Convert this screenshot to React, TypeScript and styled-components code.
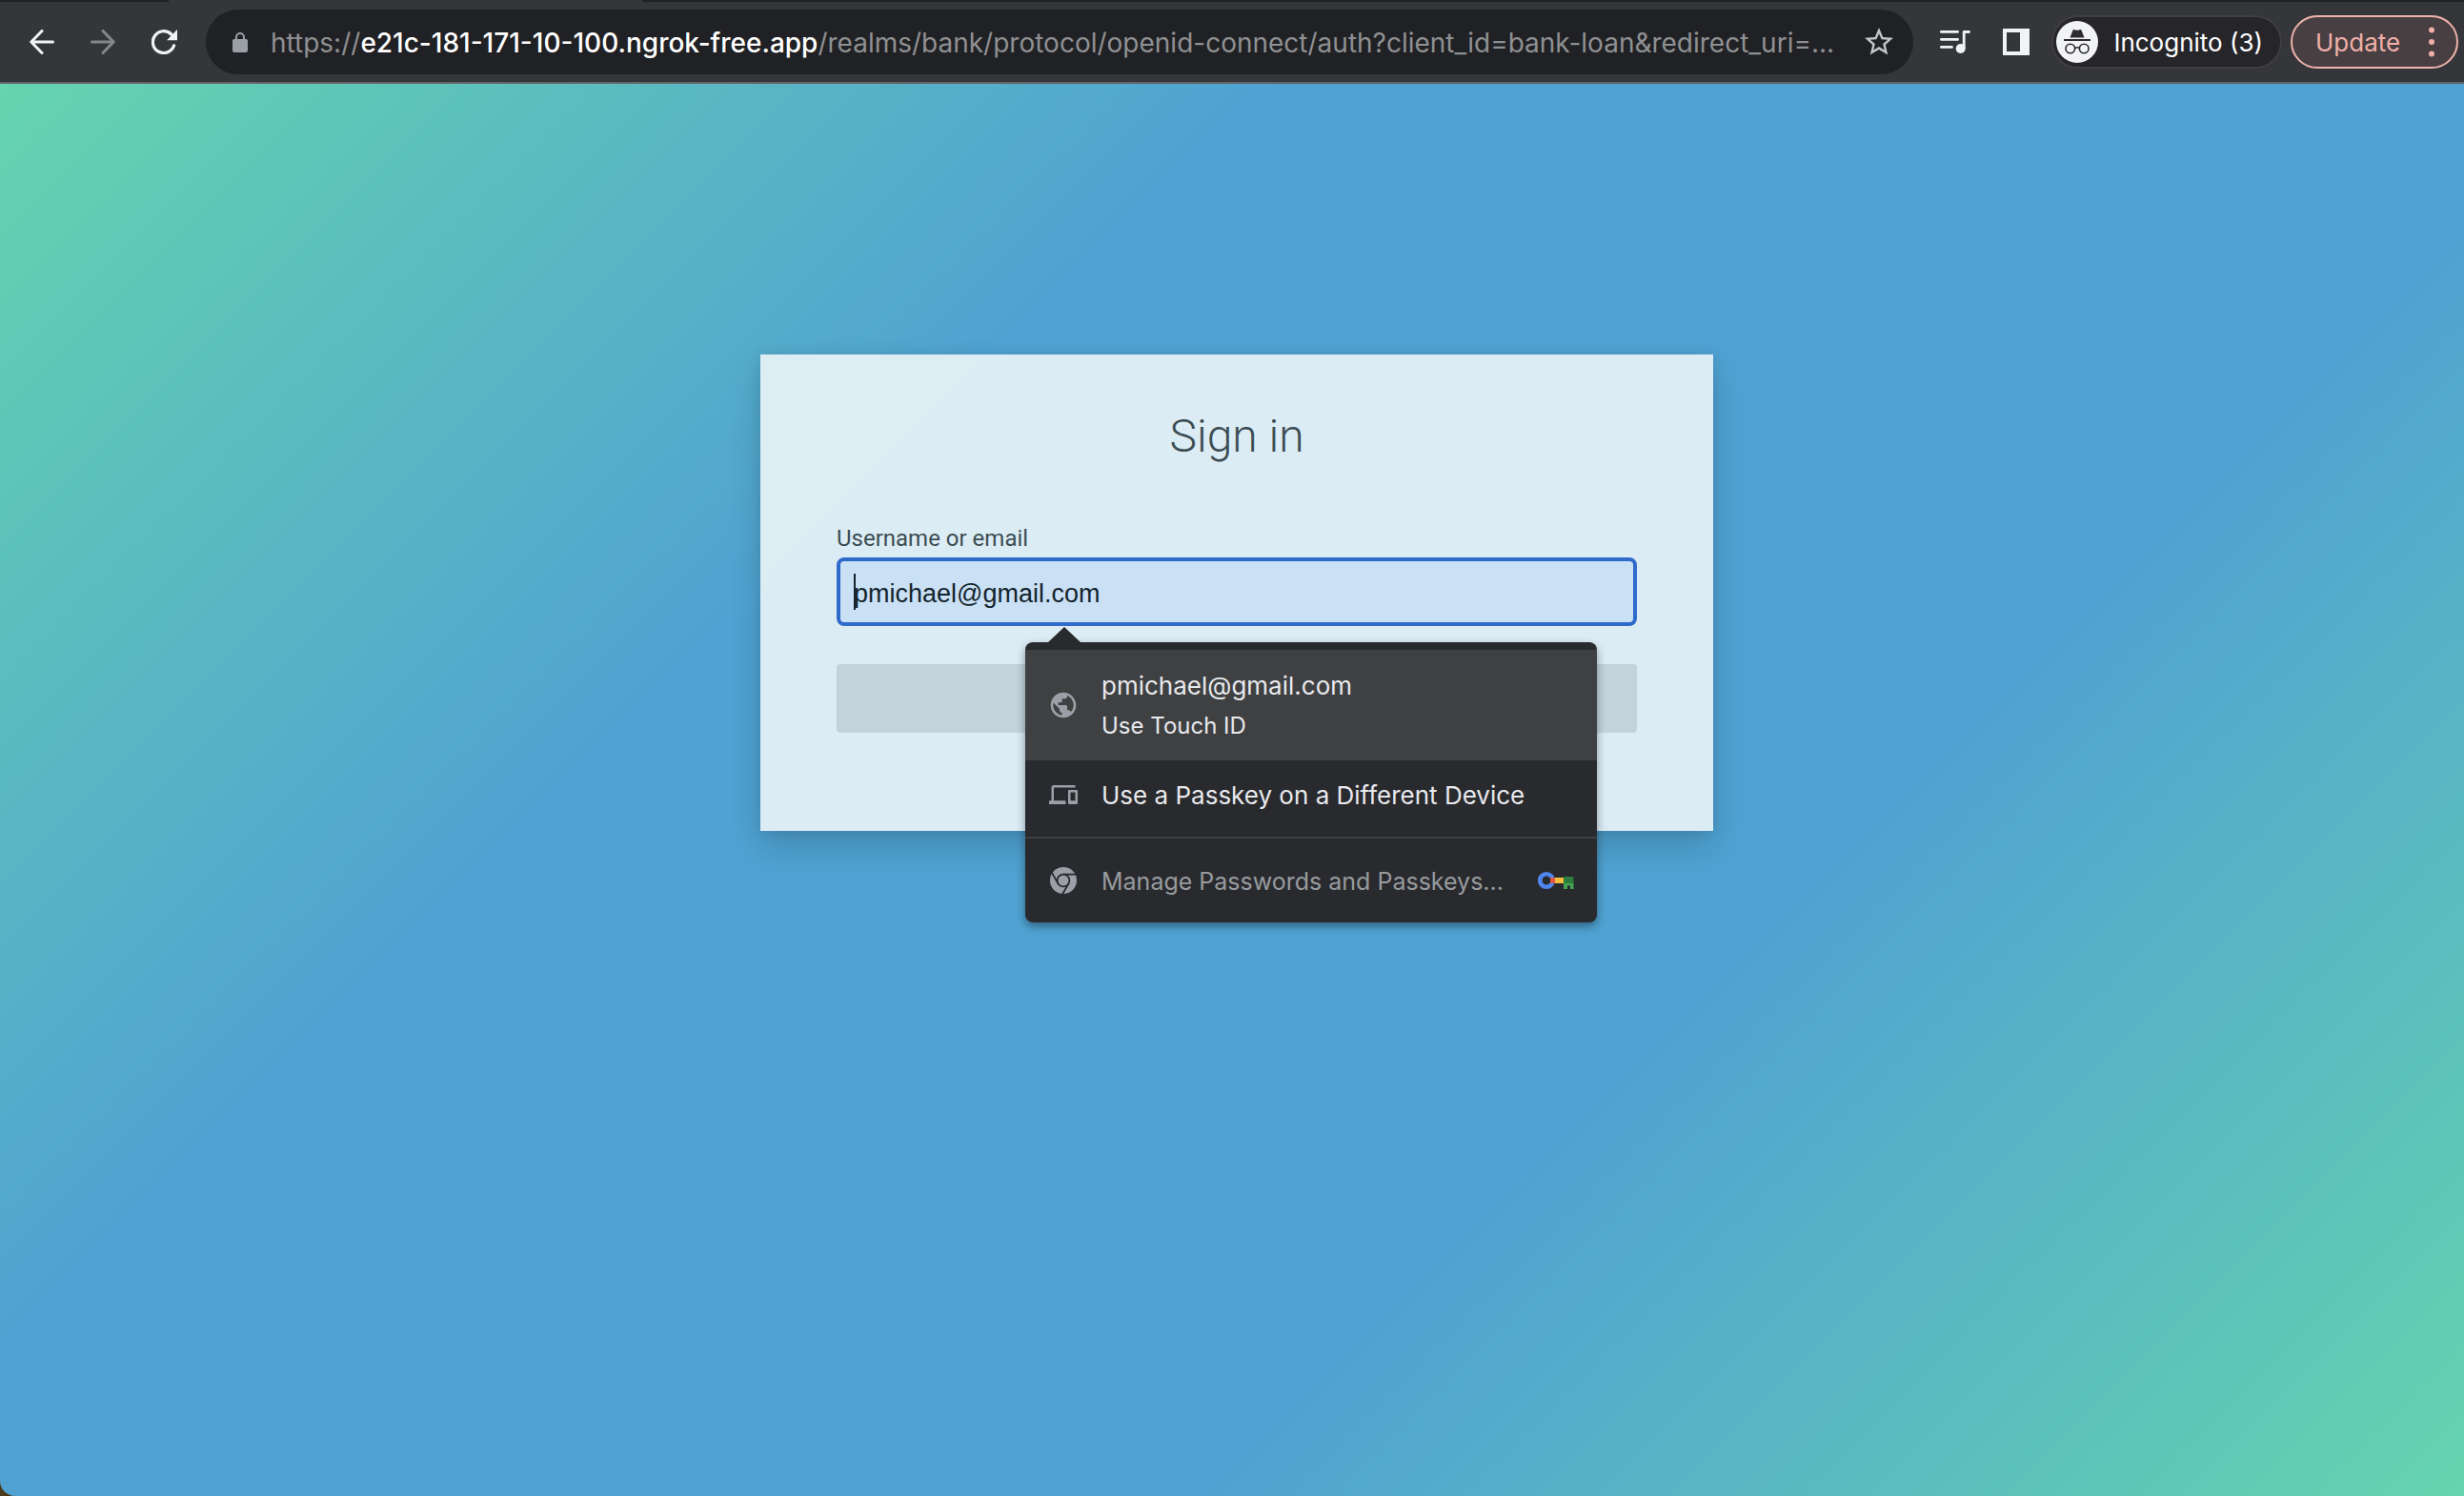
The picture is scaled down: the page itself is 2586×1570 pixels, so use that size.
import React from 'react';
import styled, { createGlobalStyle } from 'styled-components';
import { MdDevices, MdPublic, MdStarBorder } from 'react-icons/md';

const uiFont = "Inter, 'Liberation Sans', sans-serif";
const pageFont = "Roboto, 'Liberation Sans', sans-serif";

const GlobalStyle = createGlobalStyle`
  *, *::before, *::after { box-sizing: border-box; }
  body { margin: 0; background: #4a3a1c; }
  button { margin: 0; padding: 0; border: 0; background: none; color: inherit; font: inherit; }
  svg { display: block; flex: none; }
`;

const Window = styled.div`
  min-height: 100vh;
  display: flex;
  flex-direction: column;
  font-family: ${uiFont};
`;

/* ---------- browser chrome ---------- */

const TabStrip = styled.div`
  display: flex;
  height: 2px;
  padding-left: 177px;
  background: #202124;
`;

const ActiveTabEdge = styled.div`
  width: 497px;
  background: #35363a;
`;

const Toolbar = styled.header`
  display: flex;
  align-items: center;
  height: 86px;
  padding: 0 6px 0 31px;
  background: #35363a;
  border-bottom: 2px solid #636468;
`;

const NavButtons = styled.nav`
  display: flex;
  align-items: center;
  gap: 38px;
  margin-right: 30px;
`;

const IconButton = styled.button<{ $dim?: boolean }>`
  display: flex;
  color: ${p => (p.$dim ? '#868789' : '#f1f3f4')};
`;

const AddressBar = styled.div`
  display: flex;
  align-items: center;
  flex: 1;
  min-width: 0;
  height: 68px;
  padding: 0 18px 0 28px;
  border-radius: 34px;
  background: #202124;
  color: #bdc1c6;
`;

const Url = styled.div`
  flex: 1;
  min-width: 0;
  margin: 0 24px;
  padding-top: 2px;
  overflow: hidden;
  white-space: nowrap;
  color: #8f9092;
  font-size: 28px;
  line-height: 40px;
`;

const Host = styled.span`
  color: #ffffff;
  font-weight: 500;
`;

const Actions = styled.div`
  display: flex;
  align-items: center;
  gap: 34px;
  margin: 0 23px 0 28px;
`;

const Pill = styled.button<{ $tone: 'profile' | 'update' }>`
  display: flex;
  align-items: center;
  justify-content: space-between;
  height: 56px;
  border-radius: 28px;
  border: 2px solid ${p => (p.$tone === 'update' ? '#f0b3ab' : '#3f3e43')};
  background: ${p => (p.$tone === 'update' ? '#473f42' : '#26252a')};
  color: ${p => (p.$tone === 'update' ? '#f0b0a8' : '#ffffff')};
  width: ${p => (p.$tone === 'update' ? 176 : 242)}px;
  padding: ${p => (p.$tone === 'update' ? '0 23px 0 24px' : '0 18px 0 3px')};
  margin-left: ${p => (p.$tone === 'update' ? 9 : 0)}px;
  font-size: 26px;
  line-height: 36px;
  white-space: nowrap;
`;

const PillText = styled.span`
  padding-top: 2px;
`;

/* ---------- login page ---------- */

const Page = styled.main`
  flex: 1;
  display: flex;
  align-items: flex-start;
  justify-content: center;
  padding: 284px 0 80px 10px;
  border-bottom-left-radius: 16px;
  background: linear-gradient(135deg, #66d4ae 0%, #4fa2d2 33%, #4fa2d2 67%, #66d4ae 100%);
  font-family: ${pageFont};
`;

const Card = styled.form`
  width: 1000px;
  padding: 58px 80px 103px;
  background: rgba(255, 255, 252, 0.8);
  box-shadow: 0 16px 32px rgba(3, 3, 3, 0.16), 0 0 12px rgba(3, 3, 3, 0.08);
`;

const Title = styled.h1`
  margin: 0 0 61px;
  color: #3b4c53;
  font-size: 48px;
  font-weight: 300;
  line-height: 56px;
  text-align: center;
`;

const Label = styled.label`
  display: block;
  margin-bottom: 2px;
  color: #3b4c53;
  font-size: 24px;
  line-height: 36px;
`;

const Field = styled.div`
  position: relative;
  margin-bottom: 40px;
`;

const TextInput = styled.input`
  display: block;
  width: 100%;
  height: 72px;
  padding: 4px 14px 0;
  border: 4px solid #2f6bcb;
  border-radius: 8px;
  outline: none;
  background: #cae0f5;
  color: #13242c;
  font-family: 'Liberation Sans', Arial, sans-serif;
  font-size: 27px;
  line-height: 36px;
`;

const Caret = styled.span`
  position: absolute;
  top: 17px;
  left: 18px;
  width: 2px;
  height: 38px;
  background: #13242c;
`;

const SubmitButton = styled.button`
  display: block;
  width: 100%;
  height: 72px;
  border-radius: 4px;
  background: #c3d3db;
`;

/* ---------- passkey suggestions ---------- */

const Popup = styled.div`
  position: absolute;
  z-index: 1;
  top: calc(100% + 17px);
  left: 198px;
  width: 600px;
  padding-top: 8px;
  border-radius: 8px;
  background: #292a2e;
  box-shadow: 0 4px 10px rgba(0, 0, 0, 0.4);
  font-family: ${uiFont};

  &::before {
    content: '';
    position: absolute;
    bottom: 100%;
    left: 24px;
    border: 17px solid transparent;
    border-top-width: 0;
    border-bottom: 16px solid #292a2e;
  }
`;

const Option = styled.button<{ $height: number; $active?: boolean; $muted?: boolean }>`
  display: flex;
  align-items: center;
  gap: 24px;
  width: 100%;
  height: ${p => p.$height}px;
  padding: 0 24px;
  background: ${p => (p.$active ? '#3f4042' : 'transparent')};
  color: ${p => (p.$muted ? '#979b9e' : '#e8e9ed')};
  font-size: ${p => (p.$muted ? 25 : 26)}px;
  line-height: 36px;
  text-align: left;
  white-space: nowrap;
`;

const OptionIcon = styled.span`
  display: flex;
  flex: none;
  justify-content: center;
  width: 32px;
  color: #9aa0a6;
`;

const OptionText = styled.span`
  display: flex;
  flex-direction: column;
  gap: 6px;
  flex: 1;
  padding-top: 2px;
`;

const OptionHint = styled.span`
  font-size: 24px;
`;

const Divider = styled.hr`
  height: 2px;
  margin: 8px 0 0;
  border: 0;
  background: #3f4045;
`;

/* ---------- icons ---------- */

const BackIcon = () => (
  <svg width="26" height="26" viewBox="0 0 26 26" fill="none" stroke="currentColor" strokeWidth="3" strokeLinecap="round" strokeLinejoin="round">
    <path d="M24.500 13H2M13 1.500L1.800 13L13 24.500" />
  </svg>
);

const ForwardIcon = () => (
  <svg width="26" height="26" viewBox="0 0 26 26" fill="none" stroke="currentColor" strokeWidth="3" strokeLinecap="round" strokeLinejoin="round">
    <path d="M1.500 13H24M13 1.500L24.200 13L13 24.500" />
  </svg>
);

const ReloadIcon = () => (
  <svg width="27" height="26" viewBox="0 0 27 26">
    <path d="M23.600 16.800A11.400 11.400 0 1 1 20.800 5" fill="none" stroke="currentColor" strokeWidth="3.200" strokeLinecap="round" />
    <path d="M27 0v11.300H16z" fill="currentColor" />
  </svg>
);

const LockIcon = () => (
  <svg width="16" height="21" viewBox="0 0 16 21">
    <rect y="7" width="16" height="14" rx="2" fill="#9aa0a6" />
    <path d="M4 8V5a4 4 0 0 1 8 0v3" fill="none" stroke="#9aa0a6" strokeWidth="2" />
  </svg>
);

const QueueIcon = () => (
  <svg width="32" height="28" viewBox="0 0 32 28" fill="none" stroke="currentColor" strokeWidth="2.800" strokeLinecap="round">
    <path d="M1.400 3.400H18.600M1.400 11.400H18.600M1.400 19.400H12.500" />
    <path d="M30.500 3.400H25.200V21" strokeLinecap="butt" strokeLinejoin="round" />
    <path d="M26 3.400H30.500" />
    <circle cx="21.700" cy="21" r="5" fill="currentColor" stroke="none" />
  </svg>
);

const SidePanelIcon = () => (
  <svg width="28" height="28" viewBox="0 0 28 28" fill="currentColor">
    <path fillRule="evenodd" d="M0 0H28V28H0zM4 4V24H18V4z" />
  </svg>
);

const IncognitoIcon = () => (
  <svg width="44" height="44" viewBox="0 0 44 44">
    <circle cx="22" cy="22" r="22" fill="#f1f3f4" />
    <path d="M14.500 17.500L17.500 9.800Q18 8.800 19.200 9.200L21 9.800H23L24.800 9.200Q26 8.800 26.500 9.800L29.500 17.500z" fill="#2b2b30" />
    <path d="M8 20H36" stroke="#2b2b30" strokeWidth="2" />
    <g fill="none" stroke="#2b2b30" strokeWidth="1.600">
      <circle cx="14.800" cy="29" r="4.800" />
      <circle cx="29.200" cy="29" r="4.800" />
      <path d="M19.600 28.600Q22 27 24.400 28.600" />
    </g>
  </svg>
);

const MoreIcon = () => (
  <svg width="6" height="34" viewBox="0 0 6 34" fill="currentColor">
    <circle cx="3" cy="4.500" r="3" />
    <circle cx="3" cy="17" r="3" />
    <circle cx="3" cy="29.500" r="3" />
  </svg>
);

const ChromeIcon = () => (
  <svg width="28" height="28" viewBox="0 0 28 28">
    <circle cx="14" cy="14" r="14" fill="#9aa0a6" />
    <g stroke="#292a2e" strokeWidth="1.800">
      {[0, 120, 240].map(angle => (
        <path key={angle} d="M14 7.600H28" transform={`rotate(${angle} 14 14)`} />
      ))}
    </g>
    <circle cx="14" cy="14" r="6.400" fill="#9aa0a6" stroke="#292a2e" strokeWidth="1.800" />
  </svg>
);

const KeyIcon = () => (
  <svg width="38" height="22" viewBox="0 0 38 22">
    <circle cx="9" cy="11" r="6.800" fill="none" stroke="#4f86ee" strokeWidth="4.600" />
    <path d="M13 8H18V14H13z" fill="#e2574c" />
    <path d="M18 8H27V14H18z" fill="#f6bf3f" />
    <path d="M27 7H37.500V14H27z" fill="#2d7d3e" />
    <path d="M27 14H37.500V20H34V16.500H31V20H27z" fill="#47a457" />
  </svg>
);

const BrowserBar = () => (
  <>
    <TabStrip>
      <ActiveTabEdge />
    </TabStrip>
    <Toolbar>
      <NavButtons>
        <IconButton aria-label="Back"><BackIcon /></IconButton>
        <IconButton $dim aria-label="Forward"><ForwardIcon /></IconButton>
        <IconButton aria-label="Reload"><ReloadIcon /></IconButton>
      </NavButtons>
      <AddressBar>
        <LockIcon />
        <Url>
          https://<Host>e21c-181-171-10-100.ngrok-free.app</Host>/realms/bank/protocol/openid-connect/auth?client_id=bank-loan&amp;redirect_uri=...
        </Url>
        <IconButton aria-label="Bookmark this page">
          <MdStarBorder size={36} color="#c4c5c6" />
        </IconButton>
      </AddressBar>
      <Actions>
        <IconButton aria-label="Media controls"><QueueIcon /></IconButton>
        <IconButton aria-label="Side panel"><SidePanelIcon /></IconButton>
      </Actions>
      <Pill $tone="profile">
        <IncognitoIcon />
        <PillText>Incognito (3)</PillText>
      </Pill>
      <Pill $tone="update">
        <PillText>Update</PillText>
        <MoreIcon />
      </Pill>
    </Toolbar>
  </>
);

const PasskeyPopup = () => (
  <Popup>
    <Option type="button" $height={116} $active>
      <OptionIcon><MdPublic size={32} /></OptionIcon>
      <OptionText>
        <span>pmichael@gmail.com</span>
        <OptionHint>Use Touch ID</OptionHint>
      </OptionText>
    </Option>
    <Option type="button" $height={72}>
      <OptionIcon><MdDevices size={30} /></OptionIcon>
      <OptionText>Use a Passkey on a Different Device</OptionText>
    </Option>
    <Divider />
    <Option type="button" $height={88} $muted>
      <OptionIcon><ChromeIcon /></OptionIcon>
      <OptionText>Manage Passwords and Passkeys...</OptionText>
      <KeyIcon />
    </Option>
  </Popup>
);

export default function App() {
  return (
    <Window>
      <GlobalStyle />
      <BrowserBar />
      <Page>
        <Card onSubmit={event => event.preventDefault()}>
          <Title>Sign in</Title>
          <Label htmlFor="username">Username or email</Label>
          <Field>
            <TextInput id="username" type="text" defaultValue="pmichael@gmail.com" />
            <Caret />
            <PasskeyPopup />
          </Field>
          <SubmitButton type="submit" aria-label="Sign in" />
        </Card>
      </Page>
    </Window>
  );
}
